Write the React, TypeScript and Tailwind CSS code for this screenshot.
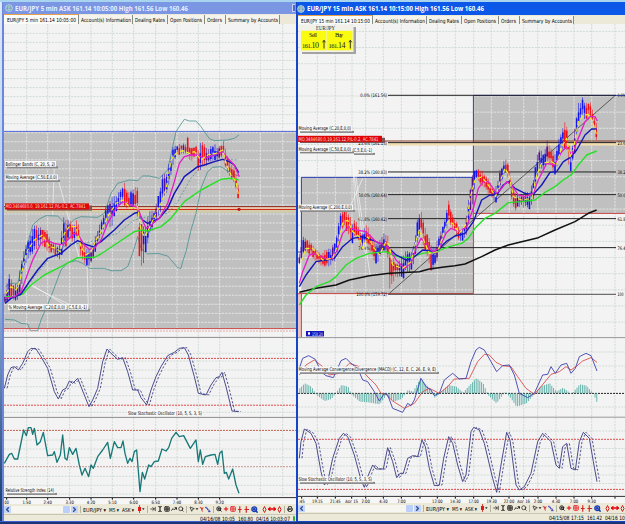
import { ReactNode } from "react";
import {
  ArrowRightToLine,
  ChevronLeft,
  ChevronRight,
  Grid2x2,
  Grid3x3,
  MousePointer2,
  MoveHorizontal,
  Plus,
  Printer,
  Search,
  TextCursor,
  TrendingUp,
  ZoomIn,
} from "lucide-react";

// chart series are stored in thirds of a pixel, relative to their pane
type Bar = [number, number, number];

const L_GRID = [77, 140, 206, 270, 334, 398, 464, 528, 592, 656, 778, 845];
const R_GRID = [64, 118, 168, 209, 262, 316, 372, 424, 478, 533, 586, 640, 683, 725, 780, 834, 887, 957];

const L_BARS: Bar[] = [
  [12, 520, 550], [25, 450, 545], [38, 490, 540], [50, 490, 548], [58, 430, 520], [70, 385, 445], [85, 345, 415],
  [100, 310, 400], [112, 320, 385], [125, 320, 380], [135, 310, 400], [150, 360, 400], [165, 370, 410],
  [175, 380, 425], [185, 290, 400], [192, 280, 390], [205, 300, 360], [218, 310, 385], [230, 295, 345],
  [240, 360, 420], [250, 375, 432], [262, 385, 440], [275, 370, 430], [288, 330, 380], [300, 300, 345],
  [320, 240, 320], [333, 230, 330], [345, 220, 280], [360, 200, 250], [370, 195, 255], [374, 140, 300],
  [378, 210, 270], [395, 200, 270], [408, 180, 270], [416, 250, 445], [425, 310, 448], [435, 310, 395],
  [445, 270, 360], [460, 270, 310], [475, 200, 300], [485, 155, 240], [495, 165, 230], [505, 120, 190],
  [515, 80, 140], [525, 70, 110], [545, 70, 100], [555, 72, 105], [560, 35, 115], [565, 75, 120], [570, 75, 130],
  [585, 75, 110], [592, 80, 160], [605, 55, 150], [620, 90, 135], [635, 65, 125], [650, 80, 125], [667, 60, 110],
  [675, 90, 160], [690, 130, 185], [702, 145, 190], [710, 190, 235], [716, 210, 270],
];

const R_BARS: Bar[] = [
  [10, 505, 540], [18, 445, 520], [30, 455, 500], [45, 470, 515], [60, 490, 530], [75, 505, 545], [90, 490, 550],
  [105, 490, 545], [118, 460, 530], [125, 420, 500], [133, 375, 440], [145, 365, 430], [158, 380, 460],
  [168, 405, 480], [180, 400, 450], [195, 450, 495], [208, 415, 480], [220, 430, 500], [232, 470, 525],
  [243, 470, 540], [255, 455, 510], [265, 440, 500], [275, 445, 520], [282, 490, 620], [295, 520, 590],
  [308, 535, 575], [320, 500, 595], [332, 485, 560], [345, 500, 565], [355, 460, 540], [365, 385, 480],
  [375, 365, 440], [385, 405, 500], [395, 440, 520], [405, 470, 560], [415, 490, 560], [428, 450, 510],
  [440, 420, 470], [450, 380, 440], [458, 345, 410], [468, 380, 430], [478, 400, 440], [492, 430, 475],
  [502, 430, 465], [512, 390, 450], [522, 300, 400], [532, 240, 350], [539, 250, 280], [552, 250, 300],
  [562, 260, 310], [577, 280, 330], [592, 310, 345], [602, 300, 360], [612, 250, 310], [627, 220, 260],
  [637, 230, 290], [647, 290, 350], [657, 320, 380], [672, 330, 365], [687, 320, 370], [702, 310, 375],
  [712, 280, 350], [722, 200, 290], [732, 190, 250], [742, 200, 260], [755, 160, 230], [767, 190, 250],
  [777, 200, 270], [787, 160, 230], [797, 140, 190], [807, 95, 200], [815, 120, 210], [822, 220, 275],
  [832, 170, 230], [839, 100, 190], [847, 55, 120], [859, 35, 90], [869, 50, 110], [882, 45, 90], [892, 80, 120],
  [902, 110, 175],
];

const HIST = [
  10, 190, 25, 175, 45, 185, 60, 210, 85, 228, 105, 222, 125, 195, 135, 180, 155, 185, 165, 208, 190, 230, 215, 232,
  250, 238, 270, 210, 290, 230, 315, 222, 335, 195, 350, 200, 372, 160, 385, 175, 400, 190, 415, 218, 430, 205, 455,
  180, 480, 185, 500, 203, 520, 180, 540, 160, 560, 175, 575, 210, 600, 235, 625, 202, 640, 215, 660, 245, 690, 235,
  710, 212, 730, 185, 760, 175, 780, 200, 800, 188, 825, 208, 850, 178, 870, 182, 890, 205, 903, 235,
];

const L_STOCH =
  "10,190 20,150 30,128 40,125 52,135 65,115 80,80 90,70 105,72 120,95 140,130 160,200 172,222 185,195 195,190 205,168 215,175 230,160 240,185 252,215 264,245 275,225 290,190 305,110 318,72 330,85 350,103 365,98 380,140 395,195 410,195 420,218 437,240 450,195 465,155 480,125 500,92 520,82 535,70 550,68 562,90 580,155 592,205 615,210 630,180 645,158 655,155 663,142 675,185 693,258 712,260";
const R_STOCH =
  "10,130 15,80 25,42 45,55 60,85 75,170 85,210 95,200 110,130 130,70 142,55 155,65 175,120 195,195 205,217 215,185 230,150 240,162 262,162 275,98 290,140 302,188 312,175 322,175 335,130 350,122 365,125 378,75 388,95 400,160 415,212 430,210 443,130 458,65 470,85 485,150 500,200 510,180 525,50 533,37 550,45 565,85 590,190 602,232 615,150 632,52 642,75 660,210 670,225 685,215 705,175 725,80 740,55 765,80 780,150 790,160 800,95 812,85 825,160 838,165 850,80 862,52 880,70 892,140 903,200";
const RSI =
  "10,145 25,118 32,115 40,132 50,132 68,45 76,62 82,38 90,38 95,58 100,40 108,90 118,80 127,52 140,122 155,120 160,110 168,142 178,120 185,60 192,130 198,135 205,98 215,118 225,100 235,150 243,180 252,160 263,185 270,150 277,160 290,125 305,105 320,82 328,130 340,80 350,98 360,98 366,78 372,115 380,145 387,130 393,140 400,110 407,105 417,230 424,172 431,192 443,150 450,155 460,140 472,138 483,102 495,108 503,98 512,70 525,52 535,65 548,62 568,100 585,75 592,140 598,105 605,148 613,125 630,120 642,118 650,148 656,115 663,108 670,175 676,172 683,192 695,162 705,210 714,235";

const FIBS: [number, string, string][] = [
  [30, "0.0% (161.56)", "0.0%"],
  [172, "23.6% (161.13)", "23.6"],
  [260, "38.2% (160.83)", "38.2"],
  [328, "50.0% (160.64)", "50.0"],
  [400, "61.8% (160.42)", "61.8"],
  [487, "76.4% (160.16)", "76.4"],
  [627, "100.0% (159.72)", "100"],
];

function at(keys: number[][], x: number, col: number) {
  for (let i = 1; i < keys.length; i++) {
    if (x <= keys[i][0]) {
      const [a, b] = [keys[i - 1], keys[i]];
      return a[col] + ((b[col] - a[col]) * (x - a[0])) / (b[0] - a[0]);
    }
  }
  return keys[keys.length - 1][col];
}

function noise(n: number) {
  const v = Math.sin(n * 127.1 + 11.7) * 43758.5453;
  return v - Math.floor(v);
}

function Candles({ keys, step }: { keys: Bar[]; step: number }) {
  const out: ReactNode[] = [];
  const end = keys[keys.length - 1][0];
  let i = 0;
  for (let x = keys[0][0]; x <= end; x += step, i++) {
    const hi = at(keys, x, 1);
    const lo = at(keys, x, 2);
    const trend = at(keys, x + 12, 1) + at(keys, x + 12, 2) - at(keys, x - 8, 1) - at(keys, x - 8, 2);
    const down = trend / 60 + noise(i) - 0.5 > 0;
    const h = lo - hi;
    const wickTop = hi + noise(i + 30) * h * 0.2;
    const wickEnd = lo - noise(i + 60) * h * 0.2;
    const top = hi + h * (0.15 + noise(i + 50) * 0.3);
    const body = h * (0.25 + noise(i + 90) * 0.35);
    const fill = down ? "#f01018" : noise(i + 7) > 0.8 ? "#5a108a" : "#1414ee";
    out.push(
      <g key={i} fill={fill}>
        <rect x={x - 1.1} y={wickTop} width={2.2} height={wickEnd - wickTop} opacity={0.8} />
        <rect x={x - 2.3} y={top} width={4.6} height={body} />
      </g>,
    );
  }
  return <>{out}</>;
}

function Line({ pts, color, w = 3, dash, dx = 0 }: { pts: string; color: string; w?: number; dash?: string; dx?: number }) {
  return (
    <polyline
      points={pts}
      fill="none"
      stroke={color}
      strokeWidth={w}
      strokeDasharray={dash}
      strokeLinejoin="round"
      transform={`translate(${dx} 0)`}
    />
  );
}

function Pane({ x, y, children }: { x: number; y: number; children: ReactNode }) {
  return <g transform={`translate(${x} ${y}) scale(0.33333)`}>{children}</g>;
}

function HLine({ y, x1, x2, color, dash, w = 1 }: { y: number; x1: number; x2: number; color: string; dash?: string; w?: number }) {
  return <line x1={x1} x2={x2} y1={y} y2={y} stroke={color} strokeWidth={w} strokeDasharray={dash} />;
}

function Tag({ x, y, w, children }: { x: number; y: number; w: number; children: string }) {
  return (
    <g>
      <rect x={x + 2} y={y + 4.4} width={w - 1} height={2} fill="#858585" />
      <rect x={x} y={y - 1} width={w - 1} height={5.8} fill="#f8f8f8" />
      <text x={x + 0.5} y={y + 3.8} textLength={w - 2.5} lengthAdjust="spacingAndGlyphs" fontSize={5.2} fill="#000">
        {children}
      </text>
    </g>
  );
}

function Position({ x, y, w, children }: { x: number; y: number; w: number; children: string }) {
  return (
    <g>
      <rect x={x + 2} y={y + 2} width={w + 1} height={5.2} fill="#7d5555" />
      <rect x={x} y={y} width={w} height={6} fill="#e00505" />
      <text x={x + 0.5} y={y + 4.9} textLength={w - 4} lengthAdjust="spacingAndGlyphs" fontSize={5} fill="#ffd9d9">
        {children}
      </text>
    </g>
  );
}

function Axis({ x0, y, items }: { x0: number; y: number; items: [number, string][] }) {
  return (
    <g fontSize={4.6} fill="#000" textAnchor="middle">
      {items.map(([u, t]) => (
        <g key={u}>
          <rect x={x0 + u / 3 - 0.5} y={y} width={1} height={1.6} />
          {t && (
            <text x={x0 + u / 3} y={y + 5.6} textLength={t.length * 2.1} lengthAdjust="spacingAndGlyphs">
              {t}
            </text>
          )}
        </g>
      ))}
    </g>
  );
}

function Grid({ x0, xs, rows, x1, x2 }: { x0: number; xs: number[]; rows: number[]; x1: number; x2: number }) {
  return (
    <g stroke="#c6d4cb" strokeWidth={0.8} strokeDasharray="2 1.2">
      {xs.map((u) => (
        <line key={u} x1={x0 + u / 3} x2={x0 + u / 3} y1={24} y2={497} />
      ))}
      {rows.map((y) => (
        <line key={y} x1={x1} x2={x2} y1={y} y2={y} />
      ))}
    </g>
  );
}

function GrayBox({ id, x, y, w, h, x0, xs, rows }: { id: string; x: number; y: number; w: number; h: number; x0: number; xs: number[]; rows: number[] }) {
  return (
    <g>
      <clipPath id={id}>
        <rect x={x} y={y} width={w} height={h} />
      </clipPath>
      <rect x={x} y={y} width={w} height={h} fill="#c0c0c0" />
      <g clipPath={`url(#${id})`} stroke="#e8ece9" strokeWidth={0.8} strokeDasharray="2.4 1">
        {xs.map((u) => (
          <line key={u} x1={x0 + u / 3} x2={x0 + u / 3} y1={24} y2={337} />
        ))}
        {rows.map((r) => (
          <line key={r} x1={x} x2={x + w} y1={r} y2={r} />
        ))}
      </g>
    </g>
  );
}

const L_ROWS = Array.from({ length: 33 }, (_, i) => 33.4 + i * 9.03);
const R_ROWS = Array.from({ length: 19 }, (_, i) => 31.4 + i * 16.15);

function FiveMinuteChart() {
  return (
    <svg viewBox="3 24 293 480" className="block h-[480px] w-[293px] font-['DejaVu_Sans']">
      <rect x={3} y={24} width={293} height={480} fill="#f3f3f3" />
      <Grid
        x0={0}
        xs={L_GRID}
        rows={[...L_ROWS.filter((y) => y < 131), 353.3, 361, 370, 378.3, 386.7, 395.7, 412.3, 440, 449, 457.7, 476.3, 485.3, 494]}
        x1={3}
        x2={296}
      />
      <GrayBox id="l-box" x={3} y={131.3} w={293} h={197.2} x0={0} xs={L_GRID} rows={L_ROWS} />
      <HLine y={131.4} x1={3} x2={296} color="#5468d8" />
      <HLine y={328.6} x1={3} x2={296} color="#c94848" />
      <rect x={88} y={207} width={208} height={2.5} fill="#e9c8b0" />
      <rect x={3} y={210} width={293} height={2.6} fill="#d3cca8" />
      <HLine y={206.6} x1={3} x2={296} color="#8c2a1a" />
      <HLine y={209.5} x1={88} x2={296} color="#d02a1a" />

      <Pane x={0} y={120}>
        <Line w={2.2} color="#3d8a8a" pts="12,500 30,490 50,490 75,390 95,315 115,297 135,287 170,288 200,318 220,298 240,290 290,292 310,280 330,220 350,190 385,180 410,182 425,168 445,168 475,175 500,150 515,80 525,35 535,20 550,-2 565,3 585,3 600,20 625,56 640,62 680,60 700,55 714,45" />
        <Line w={2.2} color="#3d8a8a" pts="12,598 40,600 60,610 80,612 88,632 110,632 120,600 150,530 180,450 200,428 225,422 245,430 265,445 310,445 330,452 360,452 380,440 395,400 410,350 420,385 440,402 470,400 500,408 530,443 540,445 545,425 555,395 570,330 585,280 600,205 620,155 635,142 660,140 690,160 713,168" />
        <Line w={2} dash="6 5" color="#3d8a8a" pts="12,540 60,525 100,470 150,410 200,372 250,370 320,350 350,340 400,300 440,290 500,280 530,245 570,175 600,140 660,118 710,120" />
        <g stroke="#f4f4f4" strokeWidth={2}>
          <path d="M172 180 235 415M160 142 155 285M262 560 258 430M200 560 85 490M218 560 95 500" />
        </g>
        <Candles keys={L_BARS} step={6.3} />
        <Line w={4.4} color="#28e028" pts="12,530 40,530 65,522 90,495 130,465 180,440 230,413 280,412 300,402 340,375 400,335 420,330 440,333 480,320 510,295 550,245 600,210 660,178 690,175 713,180" />
        <Line w={4.4} color="#1616b8" pts="12,550 30,535 60,522 85,485 110,450 140,415 180,400 210,375 230,362 250,372 275,380 300,365 340,330 370,300 400,280 412,277 425,300 440,310 475,295 500,265 520,220 550,170 590,140 610,135 640,125 665,118 685,125 700,135 713,158" />
        <Line w={4} color="#e41ec8" pts="12,535 40,530 60,515 75,475 95,420 120,370 135,360 160,370 185,375 200,360 220,340 235,350 250,375 265,388 280,385 300,360 320,310 345,265 365,245 390,255 410,262 420,290 435,325 450,315 475,295 500,250 520,185 535,130 550,110 570,105 590,105 610,115 640,105 665,95 680,115 700,135 715,170" />
        <Line w={3.6} dash="13 7" color="#f4ee22" pts="15,520 30,500 45,510 55,490 68,430 80,390 100,360 125,345 145,380 165,385 178,395 190,340 205,320 225,320 240,380 255,405 270,395 285,360 300,335 320,290 345,250 365,240 390,265 410,260 420,330 430,350 440,335 460,290 480,250 495,210 510,120 525,100 545,92 565,100 580,95 600,120 620,105 645,100 665,90 675,130 690,165 705,185 712,225" />
        <circle cx={714} cy={268} r={5} fill="#c01818" />
      </Pane>

      <Tag x={4} y={162} w={52}>Bollinger Bands (C, 20, S, 2)</Tag>
      <Tag x={4} y={175.5} w={54}>Moving Average (C,50,E,0,0)</Tag>
      <Tag x={65.5} y={305} w={22.5}>(C,5,E,0,-1)</Tag>
      <Tag x={7} y={305} w={59}>% Moving Average (C,20,E,0,0)</Tag>
      <Position x={4} y={203.4} w={84}>MO.3484680.0, 19,161.12,P/L-0.2, AC.7841</Position>

      <HLine y={331} x1={3} x2={296} color="#d78d8d" dash="2 1" w={0.7} />
      <HLine y={337.4} x1={3} x2={296} color="#8d8d8d" />
      <HLine y={417.4} x1={3} x2={296} color="#8d8d8d" />
      <HLine y={358.4} x1={3} x2={296} color="#e04c4c" dash="2 1" />
      <HLine y={405.2} x1={3} x2={296} color="#e04c4c" dash="2 1" />
      <Pane x={0} y={325}>
        <Line w={2.6} dash="7 5" color="#3e3e85" dx={8} pts={L_STOCH} />
        <Line w={2.8} color="#3e3e85" pts={L_STOCH} />
      </Pane>
      <rect x={126} y={409.5} width={76} height={6.5} fill="#f8f8f8" />
      <text x={127} y={414.8} fontSize={5.2} textLength={74} lengthAdjust="spacingAndGlyphs">
        Slow Stochastic Oscillator (10, 5, S, 3, S)
      </text>

      <HLine y={430.4} x1={3} x2={296} color="#c06050" dash="2 1" />
      <HLine y={466.7} x1={3} x2={296} color="#c59a95" dash="2 1" />
      <Pane x={0} y={415}>
        <Line w={4} color="#187878" pts={RSI} />
      </Pane>
      <Tag x={4} y={488.5} w={51}>Relative Strength Index (14)</Tag>
      <rect x={3} y={497.6} width={293} height={7} fill="#f6f6f6" />
      <HLine y={497.6} x1={3} x2={296} color="#333" />
      <Axis
        x0={0}
        y={498}
        items={[[17, "00"], [77, "1:50"], [140, "2:40"], [206, "3:30"], [270, "4:20"], [334, "5:10"], [398, "6:00"], [464, "6:50"], [528, "7:40"], [592, "8:30"], [656, "9:20"]]}
      />
    </svg>
  );
}

function FifteenMinuteChart() {
  const hist = [];
  const keys = [];
  for (let i = 0; i < HIST.length; i += 2) keys.push([HIST[i], HIST[i + 1]]);
  for (let x = 10; x <= 905; x += 5.4) {
    const y = at(keys, x, 1);
    hist.push(<rect key={x} x={x} y={Math.min(205, y)} width={2.8} height={Math.abs(205 - y)} />);
  }

  return (
    <svg viewBox="298 24 327 479" className="block h-[479px] w-[327px] font-['DejaVu_Sans']">
      <rect x={298} y={24} width={327} height={479} fill="#f3f3f3" />
      <Grid x0={296} xs={R_GRID} rows={[...R_ROWS, 352, 366, 379.5, 407, 431, 448.5, 457.5, 466, 475, 483.5]} x1={298} x2={625} />
      <GrayBox id="r-box-a" x={301.3} y={177.3} w={172.2} h={116.2} x0={296} xs={R_GRID} rows={R_ROWS} />
      <GrayBox id="r-box-b" x={473.3} y={95.3} w={151.7} h={118} x0={296} xs={R_GRID} rows={R_ROWS} />
      <rect x={298} y={294} width={3.4} height={43.5} fill="#eec4c0" />
      <path d="M298 252H301.4V177.4H473.4V95.4H625" fill="none" stroke="#2f3fb8" />
      <path d="M298 293.6H473.4V177.5M301.4 294V337M473.4 213.4H625" fill="none" stroke="#c84444" />
      <rect x={388} y={143} width={237} height={2.6} fill="#f0ddb0" />
      <HLine y={141} x1={298} x2={625} color="#8a3a20" />

      {FIBS.map(([u, left, right]) => (
        <g key={u} fontSize={4.8}>
          <HLine y={85.3 + u / 3} x1={388} x2={616} color="#222" w={u === 627 ? 0.8 : 1} />
          <text x={387} y={87.2 + u / 3} textAnchor="end" textLength={left.length * 2.05} lengthAdjust="spacingAndGlyphs">
            {left}
          </text>
          <text x={617.5} y={87.2 + u / 3} textLength={right.length * 2} lengthAdjust="spacingAndGlyphs">
            {right}
          </text>
        </g>
      ))}

      <Pane x={296} y={85}>
        <g stroke="#f8f8f8" strokeWidth={2}>
          <path d="M165 140 178 375M165 200 205 500M200 280 165 360M170 205 222 570" />
        </g>
        <path d="M280 625 957 32" stroke="#222" strokeWidth={2} />
        <Candles keys={R_BARS} step={5.9} />
        <Line w={4.6} color="#111" pts="10,622 60,610 120,600 160,585 220,572 280,565 370,560 400,552 450,545 477,542 507,537 557,515 597,495 637,480 677,470 727,458 777,435 837,410 877,385 902,375" />
        <Line w={4.2} color="#28e028" pts="10,660 30,630 60,605 100,590 120,575 150,540 180,520 220,505 270,500 300,515 340,518 380,505 420,500 460,485 497,475 517,460 537,430 567,400 597,385 637,353 677,350 717,345 747,322 777,305 802,285 827,268 847,240 872,210 902,198" />
        <Line w={4.2} color="#1616b8" pts="10,605 30,570 60,530 90,525 115,520 140,485 170,460 200,455 240,470 275,485 300,510 330,525 350,520 380,495 420,500 450,470 477,453 507,445 532,410 557,345 582,330 602,330 622,300 637,290 657,310 687,325 712,328 737,300 762,262 782,260 802,230 822,218 842,195 867,150 887,132 902,132" />
        <Line w={4} color="#e41ec8" pts="10,595 20,560 40,510 60,505 90,522 110,520 125,490 140,445 158,425 180,435 210,440 240,470 265,480 280,490 300,525 325,550 345,535 360,490 375,460 390,475 410,500 430,490 450,445 465,430 490,440 512,425 532,370 547,310 562,290 577,290 602,325 617,310 632,290 647,300 667,330 687,335 712,325 727,285 752,235 777,240 797,200 812,185 827,210 847,160 867,110 882,95 897,95 904,108" />
        <Line w={3.6} dash="13 7" color="#f4ee22" pts="15,530 30,490 50,490 80,525 110,520 125,480 140,415 155,405 170,440 190,455 200,490 215,455 235,490 250,510 270,470 280,480 290,540 320,550 345,530 360,470 370,435 385,470 400,505 425,500 440,455 455,410 470,415 490,445 512,415 522,340 537,285 557,275 577,300 599,335 612,290 627,250 639,270 652,335 677,345 707,340 722,270 737,235 767,230 782,240 797,185 812,160 822,215 832,195 847,110 862,92 877,88 889,110 902,150" />
      </Pane>

      <Tag x={298} y={126.5} w={55}>Moving Average (C,20,E,0,0)</Tag>
      <Tag x={352} y={148.5} w={22}>(C,5,E,0,-1)</Tag>
      <Tag x={298} y={147} w={55}>Moving Average (C,50,E,0,0)</Tag>
      <Tag x={298} y={205.5} w={56}>Moving Average (C,200,E,0,0)</Tag>
      <Position x={298} y={135.8} w={84}>MO.3484680.0,19,161.12,P/L-0.2, AC.7841</Position>
      <rect x={306} y={331} width={18} height={5.4} fill="#1414b8" />
      <path d="M308 332.3h2v1.6l-1 1.5l-1-1.5z" fill="#fff" />
      <text x={312} y={335.5} fontSize={4.8} fill="#dfe2ff" textLength={11} lengthAdjust="spacingAndGlyphs">158.20</text>

      {/* floating quote ticket */}
      <rect x={302} y={27} width={54} height={27} fill="#a3a3a3" />
      <rect x={299.5} y={25} width={54} height={27} fill="#f1f1e8" />
      <rect x={301} y={30.8} width={25.5} height={19.5} fill="#fbfb10" />
      <rect x={327} y={30.8} width={25.5} height={19.5} fill="#fbfb10" />
      <g className="font-['Liberation_Serif']" fill="#26261a">
        <text x={316} y={30.2} fontSize={5.6} textLength={19} lengthAdjust="spacingAndGlyphs">EUR/JPY</text>
        <text x={309} y={37} fontSize={6.2} textLength={8}>Sell</text>
        <text x={335} y={37} fontSize={6.2} textLength={8}>Buy</text>
        <text x={302} y={47.5} fontSize={8} textLength={17}>
          <tspan fontSize={6.5}>161.</tspan>10
        </text>
        <text x={328.5} y={47.5} fontSize={8} textLength={17}>
          <tspan fontSize={6.5}>161.</tspan>14
        </text>
      </g>
      <path d="M324 48.5V40.3M322.6 42.3L324 40.3L325.4 42.3M350.3 48.5V40.3M348.9 42.3L350.3 40.3L351.7 42.3" stroke="#26261a" fill="none" strokeWidth={0.9} />

      <HLine y={337.6} x1={298} x2={625} color="#999" />
      <HLine y={417.2} x1={298} x2={625} color="#999" />
      <HLine y={393.4} x1={298} x2={625} color="#222" dash="2 1" />
      <Pane x={296} y={325}>
        <g fill="#5fb0a8">{hist}</g>
        <Line w={2.6} color="#d84848" pts="10,150 30,120 55,105 80,125 100,150 130,145 160,115 190,125 210,150 240,180 255,205 270,208 290,228 325,250 355,235 380,200 400,190 430,205 455,185 475,162 520,160 545,110 565,88 580,90 600,112 620,122 645,125 665,155 690,190 715,208 735,185 765,148 790,140 810,125 825,135 840,125 860,108 885,98 903,112" />
        <Line w={2.8} color="#4646b0" pts="10,130 20,100 38,92 58,103 75,140 90,152 112,158 125,130 135,107 150,100 165,115 185,130 200,165 215,170 235,200 250,228 265,205 275,210 290,250 320,262 335,235 345,242 355,225 375,160 390,185 405,195 415,212 430,205 445,165 470,145 490,162 510,160 525,110 540,75 550,67 565,75 585,110 602,140 620,122 640,120 655,150 670,205 695,218 715,205 740,150 755,148 765,125 778,145 795,120 812,115 825,145 838,130 850,95 870,85 885,92 903,138" />
      </Pane>
      <Tag x={298} y={367.5} w={140}>Moving Average Convergence/Divergence (MACD) (C, 12, E, C, 26, E, 9, E)</Tag>

      <HLine y={439.3} x1={298} x2={625} color="#e04c4c" dash="2 1" />
      <HLine y={489.4} x1={298} x2={625} color="#e04c4c" dash="2 1" />
      <Pane x={296} y={415}>
        <Line w={2.6} dash="7 5" color="#3e3e85" dx={8} pts={R_STOCH} />
        <Line w={2.8} color="#3e3e85" pts={R_STOCH} />
      </Pane>
      <Tag x={298} y={477.5} w={76}>Slow Stochastic Oscillator (10, 5, S, 3, S)</Tag>
      <rect x={298} y={496.4} width={327} height={7} fill="#f6f6f6" />
      <HLine y={496.4} x1={298} x2={625} color="#333" />
      <Axis
        x0={296}
        y={497}
        items={[[17, ":45"], [64, "19:15"], [118, "21:45"], [167, "Apr 15"], [209, "2:00"], [262, "4:30"], [316, "7:00"], [372, ""], [424, "12:00"], [478, "14:30"], [533, "17:00"], [587, "19:30"], [639, "22:00"], [683, "Apr 16"], [726, "2:00"], [780, "4:30"], [834, "7:00"], [887, "9:30"], [957, ""]]}
      />
    </svg>
  );
}

function Logo() {
  return (
    <svg viewBox="0 0 8 8" className="h-2 w-2 shrink-0">
      <circle cx={4} cy={4} r={3.4} fill="#5d8fae" stroke="#c9e6ee" strokeWidth={0.8} />
      <path d="M1 3h6M1.4 5.2h5.2M4 1v6" stroke="#d9f2ee" strokeWidth={0.6} />
    </svg>
  );
}

const TABS: [string, string, number][] = [
  ["Account(s) Information", "w-[54px]", 50],
  ["Dealing Rates", "w-[35px]", 30],
  ["Open Positions", "w-[37px]", 32],
  ["Orders", "w-[21px]", 15],
  ["Summary by Accounts", "w-[54px]", 50],
];

// keeps a label at the exact width it has in the terminal
function Fit({ text, w, size, color = "#000", bold }: { text: string; w: number; size: number; color?: string; bold?: boolean }) {
  return (
    <svg width={w} height={9} className="block shrink-0 overflow-visible">
      <text x={0} y={6.8} fontSize={size} fill={color} fontWeight={bold ? 700 : 400} textLength={w} lengthAdjust="spacingAndGlyphs">
        {text}
      </text>
    </svg>
  );
}

function Tabs({ first }: { first: string }) {
  return (
    <div className="flex h-[10px] items-end bg-[#ece9d8] font-['DejaVu_Sans']">
      <div className="flex h-[10px] w-[75px] items-center justify-center border-t border-r border-t-[#e8a04c] border-r-[#8b8b86] bg-[#fbfbf8]">
        <Fit text={first} w={69} size={5.6} />
      </div>
      {TABS.map(([t, w, textWidth]) => (
        <div key={t} className={`${w} flex h-[9px] items-center border-r border-[#8b8b86] bg-[#f4f3ec] pl-[2px]`}>
          <Fit text={t} w={textWidth} size={5.6} />
        </div>
      ))}
    </div>
  );
}

function Divider() {
  return <div className="mx-[2px] h-[7px] w-px shrink-0 bg-[#b5b2a2]" />;
}

function Toolbar({ scrollWidth }: { scrollWidth: string }) {
  const red = "h-[6px] w-[6px] shrink-0 text-red-600";
  const dark = "h-[6px] w-[6px] shrink-0 text-neutral-800";
  return (
    <div className="flex h-[10px] items-center overflow-hidden bg-[#ece9d8] font-['DejaVu_Sans']">
      <div className={`${scrollWidth} flex h-[7px] shrink-0 justify-between bg-[#f6f5f0]`}>
        <ChevronLeft className="h-[7px] w-[7px] bg-[#c3d5fd] text-[#34508e]" strokeWidth={5} />
        <div className="flex gap-px">
          <div className="h-[7px] w-[7px] rounded-[1px] bg-[#bccefa]" />
          <ChevronRight className="h-[7px] w-[7px] bg-[#c3d5fd] text-[#34508e]" strokeWidth={5} />
        </div>
      </div>
      <Divider />
      <div className="flex shrink-0 items-center gap-[3px]">
        <Fit text="EUR/JPY ▾" w={23} size={5.4} />
        <Fit text="M5 ▾" w={10} size={5.4} />
        <Fit text="ASK ▾" w={12} size={5.4} />
      </div>
      <svg viewBox="0 0 8 8" className="ml-[3px] h-2 w-2 shrink-0">
        <path d="M2.5 0V8" stroke="#c02020" strokeWidth={0.8} />
        <rect x={1} y={2} width={3} height={4} fill="#e01818" />
        <path d="M5 3.2h2.6L6.3 5z" fill="#222" />
      </svg>
      <Divider />
      <div className="flex shrink-0 items-center gap-[1px]">
        <ArrowRightToLine className={dark} strokeWidth={3} />
        <TextCursor className={dark} strokeWidth={4} />
        <Grid3x3 className={dark} strokeWidth={3} />
        <TrendingUp className={dark} strokeWidth={4} />
        <Search className={dark} strokeWidth={3} />
      </div>
      <Divider />
      <MousePointer2 className={dark} strokeWidth={3} />
      <svg viewBox="0 0 4 4" className="h-[4px] w-[4px] shrink-0">
        <path d="M0.500 1.200h3L2 3z" fill="#222" />
      </svg>
      <svg viewBox="0 0 14 7" className="h-[7px] w-[12px] shrink-0" fill="none">
        <path d="M1 1l3 1.2M2.6 1.8L4 6M4.8 1L3.4 4" stroke="#cc2424" />
        <path d="M8 2h2v2h2v2M7 1h2M10.500 6h3" stroke="#3034c0" />
      </svg>
      <Divider />
      <div className="flex shrink-0 items-center gap-[1px]">
        <ZoomIn className={dark} strokeWidth={4} />
        <Plus className={red} strokeWidth={4} />
        <Grid2x2 className={red} strokeWidth={3} />
        <svg viewBox="0 0 14 7" className="h-[7px] w-[13px] shrink-0" fill="none">
          <path d="M3 0V7M1 3.500h4M10 0V7M8 3.500h5" stroke="#d02020" strokeWidth={1.2} />
        </svg>
        <ZoomIn className="h-[7px] w-[7px] shrink-0 text-blue-800" strokeWidth={5} />
      </div>
      <div className="ml-[4px] flex shrink-0 items-center gap-[1px]">
        <svg viewBox="0 0 5 7" className="h-[7px] w-[5px] shrink-0" fill="none">
          <path d="M2.500 .5l1.500 3l-1.500 3l-1.500-3z" stroke="#d02020" />
        </svg>
        <MoveHorizontal className="h-[8px] w-[8px] shrink-0 text-red-600" strokeWidth={4} />
        <svg viewBox="0 0 5 7" className="h-[7px] w-[5px] shrink-0" fill="none">
          <path d="M2.500 .5l1.500 3l-1.500 3l-1.500-3z" stroke="#d02020" />
        </svg>
      </div>
      <Divider />
      <Printer className={dark} strokeWidth={3} />
    </div>
  );
}

export default function App() {
  return (
    <div className="flex h-[524px] w-[625px] flex-col overflow-hidden bg-[#1a3476]">
      <div className="h-[2px] bg-[#a9d4ef]" />
      <div className="flex h-[519px]">
        <div className="h-full w-[2px] shrink-0 bg-linear-to-b from-[#dcebfa] via-[#a8c4ec] to-[#143a6c]" />

        <section className="flex w-[294px] shrink-0 flex-col border-l-2 border-[#6c86dc] bg-[#ece9d8]">
          <div className="-ml-px flex h-[12px] items-center gap-[2px] bg-[#7b96e3] pl-[2px] font-['Open_Sans']">
            <Logo />
            <Fit text="EUR/JPY 5 min ASK 161.14 10:05:00 High 161.56 Low 160.46" w={173} size={7.2} color="#e9efff" bold />
            <div className="mr-px ml-auto h-[8px] w-[3px] rounded-l-[1px] border-y border-l border-[#c5d1f6] bg-[#4e68cc]" />
          </div>
          <Tabs first="EUR/JPY 5 min 161.14 10:05:00" />
          <div className="h-[480px] overflow-hidden">
            <FiveMinuteChart />
          </div>
          <Toolbar scrollWidth="w-[74px]" />
          <div className="flex h-[7px] items-center justify-end gap-[3px] border-t border-[#c9c6b6] pr-[2px] font-['DejaVu_Sans']">
            <Fit text="04/16/08 10:05" w={35} size={5.8} />
            <Fit text="160.80" w={15} size={5.8} />
            <Fit text="04/16 10:03:07" w={34} size={5.8} />
            <div className="-mr-[1px] h-[5px] w-[2px] rounded-full bg-[#2fb02f]" />
          </div>
        </section>

        <section className="flex w-[329px] shrink-0 flex-col border-l-2 border-[#1645c8] bg-[#ece9d8]">
          <div className="-ml-px flex h-[13px] items-center gap-[2px] bg-[#0b57e8] font-['Open_Sans']">
            <Logo />
            <Fit text="EUR/JPY 15 min ASK 161.14 10:15:00 High 161.56 Low 160.46" w={177} size={7.2} color="#ffffff" bold />
          </div>
          <Tabs first="EUR/JPY 15 min 161.14 10:15:00" />
          <div className="-mt-px h-[479px] overflow-hidden">
            <FifteenMinuteChart />
          </div>
          <Toolbar scrollWidth="w-[123px]" />
          <div className="flex h-[8px] items-center gap-[3px] border-t border-[#c9c6b6] pl-[251px] font-['DejaVu_Sans']">
            <Fit text="04/15/08 17:15" w={35} size={5.8} />
            <Fit text="161.42" w={15} size={5.8} />
            <Fit text="04/16 10:03:07" w={34} size={5.8} />
          </div>
        </section>
      </div>
      <div className="flex h-[3px]">
        <div className="h-[1px] w-[296px] bg-[#3f5fd0]" />
        <div className="h-[1px] flex-1 bg-[#1645c8]" />
      </div>
    </div>
  );
}
